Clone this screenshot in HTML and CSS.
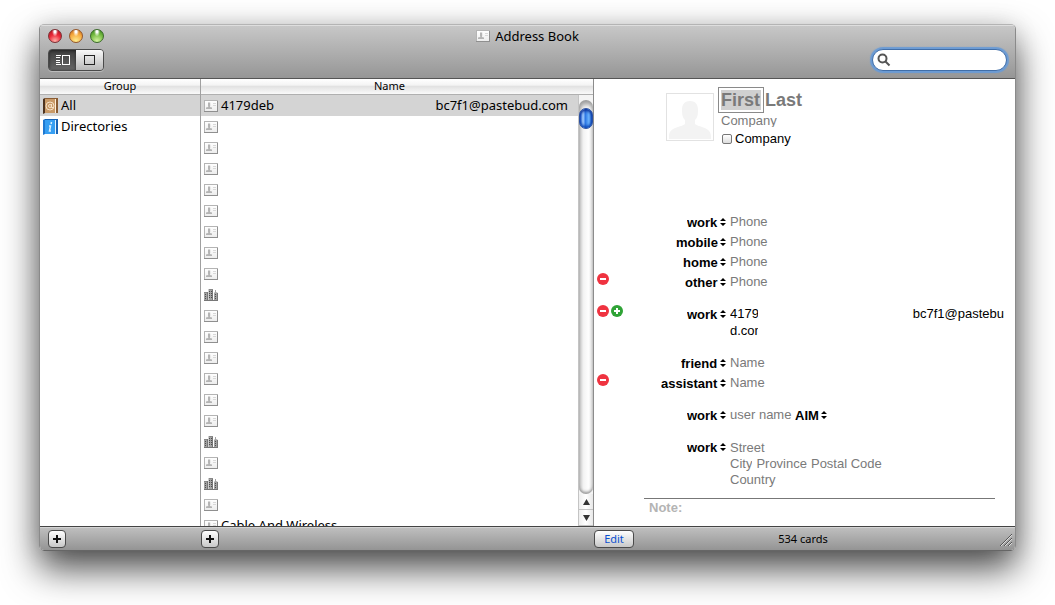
FILE: index.html
```html
<!DOCTYPE html>
<html lang="en">
<head>
    <meta charset="UTF-8">
    <meta name="viewport" content="width=device-width, initial-scale=1.0">
    <title>Address Book</title>
    <link rel="stylesheet" href="styles.css">
</head>
<body>

    <!-- shared icons -->
    <svg class="defs" width="0" height="0" aria-hidden="true">
        <linearGradient id="cardFill" x1="0" y1="0" x2="0" y2="1">
            <stop offset="0" stop-color="#ffffff"/>
            <stop offset="1" stop-color="#ececec"/>
        </linearGradient>
        <symbol id="card" viewBox="0 0 14 12">
            <rect x="0.5" y="0.5" width="13" height="11" fill="url(#cardFill)" stroke="#b4b4b4"/>
            <path d="M0 11.5h14M13.5 1v11" stroke="#8f8f8f"/>
            <path d="M4 2.500h2.200v3.200L5.900 7 8 7.500v1.500H2V7.500l2.300-.5L4 5.700z" fill="#b4b4b4"/>
            <path d="M9 3.500h3M9 5.500h3" stroke="#d8d8d8"/>
        </symbol>
        <symbol id="office" viewBox="0 0 14 12">
            <path d="M0 3h4v9H0zM4.500 0h4v12h-4zM10 4l1-1V1h1v2l2 1v8h-4z" fill="#a2a2a2"/>
            <path d="M0 3.500h3M5 .5h4" stroke="#888"/>
            <path d="M3.500 3v9M8.500 1v11M13.500 4v8M0 11.500h14" stroke="#777"/>
            <path d="M1 5.500h1M1 7.500h1M1 9.500h1M5 2.500h1M7 2.500h1M5 4.500h1M7 4.500h1M5 6.500h1M7 6.500h1M5 8.500h1M7 8.500h1M11 5.500h1M11 7.500h1M11 9.500h1" stroke="#4c4c4c"/>
        </symbol>
        <symbol id="minus" viewBox="0 0 12 12">
            <circle cx="6" cy="6" r="6" fill="#ef3340"/>
            <path d="M3 6h6" stroke="#fff" stroke-width="2"/>
        </symbol>
        <symbol id="plus" viewBox="0 0 12 12">
            <circle cx="6" cy="6" r="6" fill="#2fa336"/>
            <path d="M3 6h6M6 3v6" stroke="#fff" stroke-width="2"/>
        </symbol>
    </svg>

    <main class="window">
        <header class="titlebar">
            <div class="title-row">
                <div class="lights">
                    <button class="light red" aria-label="Close"></button>
                    <button class="light yellow" aria-label="Minimize"></button>
                    <button class="light green" aria-label="Zoom"></button>
                </div>
                <h1><svg class="icon"><use href="#card"/></svg>Address Book</h1>
            </div>
            <div class="tool-row">
                <div class="views">
                    <button class="view active" aria-label="View card and columns">
                        <svg width="14" height="12" viewBox="0 0 14 12" fill="none" stroke="#fff"><path d="M0 1.500h5M0 3.500h4M0 6.500h4M0 8.500h4M0 10.500h5"/><rect x="6.500" y="1.500" width="7" height="9"/></svg>
                    </button>
                    <button class="view" aria-label="View card only">
                        <svg width="12" height="12" viewBox="0 0 12 12" fill="none" stroke="#222"><rect x="0.500" y="1.500" width="10" height="9"/></svg>
                    </button>
                </div>
                <label class="search">
                    <svg width="14" height="14" viewBox="0 0 14 14" fill="none" stroke="#555" stroke-width="2"><circle cx="5.500" cy="5.500" r="4"/><path d="M8.500 8.500l4 4"/></svg>
                    <input type="text" aria-label="Search">
                </label>
            </div>
        </header>

        <div class="panes">
            <section class="groups">
                <h2>Group</h2>
                <ul>
                    <li class="selected">
                        <svg class="book" viewBox="0 0 16 16">
                            <path d="M0 1l2-1v15l-2 1z" fill="#4e3420"/>
                            <path d="M2 0h13v15H2z" fill="#8a5c33"/>
                            <path d="M2 1h10v14H2z" fill="#c99a68"/>
                            <path d="M12.500 1v14" stroke="#fff0dc"/>
                            <circle cx="7" cy="8" r="4" fill="none" stroke="#f6e2c8"/>
                            <circle cx="7" cy="8" r="1.500" fill="none" stroke="#f6e2c8"/>
                            <path d="M8.500 6v3.500H11" fill="none" stroke="#f6e2c8"/>
                        </svg>
                        <span>All</span>
                    </li>
                    <li>
                        <svg class="book" viewBox="0 0 16 16">
                            <path d="M0 1l2-1v15l-2 1z" fill="#1f78d0"/>
                            <path d="M2 0h13v15H2z" fill="#1763b5"/>
                            <path d="M2 1h10v14H2z" fill="#369ff3"/>
                            <path d="M12.500 1v14" stroke="#e2f3ff"/>
                            <path d="M8.500 3l-.4 2M6 7h1.500l-1 5H8" fill="none" stroke="#d9f0ff" stroke-width="1.500"/>
                        </svg>
                        <span>Directories</span>
                    </li>
                </ul>
            </section>

            <section class="names">
                <h2>Name</h2>
                <div class="list">
                    <ul>
                        <li class="selected"><svg class="icon"><use href="#card"/></svg><span>4179deb</span><span class="rest">bc7f1@pastebud.com</span></li>
                        <li><svg class="icon"><use href="#card"/></svg></li>
                        <li><svg class="icon"><use href="#card"/></svg></li>
                        <li><svg class="icon"><use href="#card"/></svg></li>
                        <li><svg class="icon"><use href="#card"/></svg></li>
                        <li><svg class="icon"><use href="#card"/></svg></li>
                        <li><svg class="icon"><use href="#card"/></svg></li>
                        <li><svg class="icon"><use href="#card"/></svg></li>
                        <li><svg class="icon"><use href="#card"/></svg></li>
                        <li><svg class="icon"><use href="#office"/></svg></li>
                        <li><svg class="icon"><use href="#card"/></svg></li>
                        <li><svg class="icon"><use href="#card"/></svg></li>
                        <li><svg class="icon"><use href="#card"/></svg></li>
                        <li><svg class="icon"><use href="#card"/></svg></li>
                        <li><svg class="icon"><use href="#card"/></svg></li>
                        <li><svg class="icon"><use href="#card"/></svg></li>
                        <li><svg class="icon"><use href="#office"/></svg></li>
                        <li><svg class="icon"><use href="#card"/></svg></li>
                        <li><svg class="icon"><use href="#office"/></svg></li>
                        <li><svg class="icon"><use href="#card"/></svg></li>
                        <li><svg class="icon"><use href="#card"/></svg><span>Cable And Wireless</span></li>
                    </ul>
                    <div class="scrollbar">
                        <div class="track"><div class="thumb"></div></div>
                        <button class="arrow" aria-label="Scroll up"><svg width="7" height="6" viewBox="0 0 7 6"><path d="M3.500 0L7 6H0z" fill="#333"/></svg></button>
                        <button class="arrow" aria-label="Scroll down"><svg width="7" height="6" viewBox="0 0 7 6"><path d="M0 0h7L3.500 6z" fill="#333"/></svg></button>
                    </div>
                </div>
            </section>

            <form class="detail">
                <div class="person">
                    <svg class="photo" viewBox="0 0 48 48">
                        <rect x="0.500" y="0.500" width="47" height="47" fill="#fff" stroke="#e2e2e2"/>
                        <path d="M24 8c6 0 8 4 8 9 0 6-1 8-3 10v4c3 3 16 3 16 12v3H3v-3c0-9 13-9 16-12v-4c-2-2-3-4-3-10 0-5 2-9 8-9z" fill="#f3f3f3"/>
                    </svg>
                    <div class="who">
                        <div class="full">
                            <div class="focus"><input class="first" type="text" placeholder="First" aria-label="First"></div>
                            <input class="last" type="text" placeholder="Last" aria-label="Last">
                        </div>
                        <input class="company" type="text" placeholder="Company" aria-label="Company name">
                        <label class="check"><input type="checkbox">Company</label>
                    </div>
                </div>

                <div class="fields">
                    <div class="group">
                        <div class="field">
                            <div class="edit"></div>
                            <select class="kind" aria-label="Phone type"><option>work</option></select>
                            <input type="text" placeholder="Phone" aria-label="Work phone">
                        </div>
                        <div class="field">
                            <div class="edit"></div>
                            <select class="kind" aria-label="Phone type"><option>mobile</option></select>
                            <input type="text" placeholder="Phone" aria-label="Mobile phone">
                        </div>
                        <div class="field">
                            <div class="edit"></div>
                            <select class="kind" aria-label="Phone type"><option>home</option></select>
                            <input type="text" placeholder="Phone" aria-label="Home phone">
                        </div>
                        <div class="field">
                            <div class="edit"><button type="button" aria-label="Remove phone"><svg><use href="#minus"/></svg></button></div>
                            <select class="kind" aria-label="Phone type"><option>other</option></select>
                            <input type="text" placeholder="Phone" aria-label="Other phone">
                        </div>
                    </div>

                    <div class="group">
                        <div class="field">
                            <div class="edit">
                                <button type="button" aria-label="Remove email"><svg><use href="#minus"/></svg></button>
                                <button type="button" aria-label="Add email"><svg><use href="#plus"/></svg></button>
                            </div>
                            <select class="kind" aria-label="Email type"><option>work</option></select>
                            <div class="email">
                                <div class="email-line"><span class="clip">4179</span><span>bc7f1@pastebu</span></div>
                                <div class="email-line"><span class="clip">d.com</span></div>
                            </div>
                        </div>
                    </div>

                    <div class="group">
                        <div class="field">
                            <div class="edit"></div>
                            <select class="kind" aria-label="Relation"><option>friend</option></select>
                            <input type="text" placeholder="Name" aria-label="Friend name">
                        </div>
                        <div class="field">
                            <div class="edit"><button type="button" aria-label="Remove relation"><svg><use href="#minus"/></svg></button></div>
                            <select class="kind" aria-label="Relation"><option>assistant</option></select>
                            <input type="text" placeholder="Name" aria-label="Assistant name">
                        </div>
                    </div>

                    <div class="group">
                        <div class="field">
                            <div class="edit"></div>
                            <select class="kind" aria-label="Chat type"><option>work</option></select>
                            <div class="chat">
                                <input type="text" placeholder="user name" aria-label="User name">
                                <select class="kind" aria-label="Service"><option>AIM</option></select>
                            </div>
                        </div>
                    </div>

                    <div class="group">
                        <div class="field">
                            <div class="edit"></div>
                            <select class="kind" aria-label="Address type"><option>work</option></select>
                            <div class="address">
                                <input type="text" placeholder="Street" aria-label="Street">
                                <div class="city">
                                    <input type="text" placeholder="City" aria-label="City">
                                    <input type="text" placeholder="Province" aria-label="Province">
                                    <input type="text" placeholder="Postal Code" aria-label="Postal Code">
                                </div>
                                <input type="text" placeholder="Country" aria-label="Country">
                            </div>
                        </div>
                    </div>
                </div>

                <div class="note"><label for="note">Note:</label><input id="note" type="text"></div>
            </form>
        </div>

        <footer class="bottombar">
            <div class="foot-groups"><button class="add" aria-label="Add group"><svg width="8" height="8" viewBox="0 0 8 8"><path d="M0 4h8M4 0v8" stroke="#111" stroke-width="2"/></svg></button></div>
            <div class="foot-names"><button class="add" aria-label="Add person"><svg width="8" height="8" viewBox="0 0 8 8"><path d="M0 4h8M4 0v8" stroke="#111" stroke-width="2"/></svg></button></div>
            <div class="foot-detail">
                <button class="edit-btn">Edit</button>
                <span class="count">534 cards</span>
                <svg class="grip" width="12" height="12" viewBox="0 0 12 12"><path d="M1 12L12 1M5 12l7-7M9 12l3-3" stroke="#ddd"/><path d="M0 12L12 0M4 12l8-8M8 12l4-4" stroke="#555"/></svg>
            </div>
        </footer>
    </main>

</body>
</html>
```
FILE: styles.css
```css
* {
    margin: 0;
    padding: 0;
    box-sizing: border-box;
}

body {
    display: flex;
    height: 100vh;
    padding: 24px 39px 54px;
    background: #fff;
    color: #000;
    font-family: "Noto Sans", "Lucida Grande", sans-serif;
    font-size: 13px;
    overflow: hidden;
}

.defs {
    position: absolute;
}

button,
input,
select {
    font: inherit;
    color: inherit;
    background: none;
    border: none;
    border-radius: 0;
    outline: none;
    appearance: none;
}

svg {
    display: block;
    flex: none;
}

ul {
    list-style: none;
}

.window {
    flex: 1;
    min-width: 0;
    display: flex;
    flex-direction: column;
    border: 1px solid #8a8a8a;
    border-top-color: #b4b4b4;
    border-bottom-color: #666;
    border-radius: 5px;
    box-shadow: 0 18px 36px rgba(0, 0, 0, 0.7), 0 0 24px rgba(0, 0, 0, 0.1);
    overflow: hidden;
}

/* Title bar */
.titlebar {
    height: 54px;
    border-bottom: 1px solid #555;
    background: linear-gradient(#c8c8c8, #969696);
    box-shadow: inset 0 1px #dedede;
}

.title-row {
    display: grid;
    grid-template-columns: 1fr auto 1fr;
    align-items: center;
    height: 22px;
    padding: 0 8px;
}

.lights {
    display: flex;
    gap: 7px;
}

.light {
    width: 14px;
    height: 14px;
    border: 1px solid #555;
    border-radius: 50%;
}

.red {
    border-color: #7c3034;
    background: radial-gradient(ellipse at 50% 10%, #fff 0 10%, transparent 35%), radial-gradient(circle at 50% 90%, #ffb0a8, #ec2b3a 50%, #a50d1c);
}

.yellow {
    border-color: #94572a;
    background: radial-gradient(ellipse at 50% 10%, #fff 0 10%, transparent 35%), radial-gradient(circle at 50% 90%, #ffee90, #f5a53a 60%, #b55d18);
}

.green {
    border-color: #3b6a2a;
    background: radial-gradient(ellipse at 50% 10%, #fff 0 10%, transparent 35%), radial-gradient(circle at 50% 90%, #d4f5a0, #6fb63c 60%, #2f7a1c);
}

h1 {
    display: flex;
    align-items: center;
    gap: 5px;
    font-size: 13px;
    font-weight: normal;
}

.icon {
    width: 14px;
    height: 12px;
}

.tool-row {
    display: flex;
    justify-content: space-between;
    align-items: center;
    height: 26px;
    padding: 0 8px;
}

.views {
    display: flex;
    border: 1px solid #4a4a4a;
    border-radius: 4px;
    box-shadow: 0 1px #bbb;
    overflow: hidden;
}

.view {
    display: flex;
    align-items: center;
    justify-content: center;
    width: 27px;
    height: 20px;
    background: linear-gradient(#fafafa, #b8b8b8);
}

.view.active {
    background: linear-gradient(#3e3e3e, #666);
    box-shadow: inset 0 1px 3px #222;
}

.search {
    display: flex;
    align-items: center;
    gap: 4px;
    width: 135px;
    height: 22px;
    padding: 0 4px;
    border: 1px solid #416ea8;
    border-radius: 11px;
    background: #fff;
    box-shadow: 0 0 1px 2px #6b9bd4;
}

.search input {
    flex: 1;
    min-width: 0;
}

/* Panes */
.panes {
    flex: 1;
    min-height: 0;
    display: flex;
    background: #fff;
}

.groups,
.foot-groups {
    width: 161px;
}

.groups {
    border-right: 1px solid #a0a0a0;
}

.names,
.foot-names {
    width: 393px;
}

.names {
    display: flex;
    flex-direction: column;
    border-right: 1px solid #8c8c8c;
}

h2 {
    flex: none;
    height: 16px;
    border-bottom: 1px solid #b0b0b0;
    background: linear-gradient(#fff 0, #f4f4f4 40%, #e2e2e2 50%, #fafafa 100%);
    font-size: 11px;
    line-height: 14px;
    font-weight: normal;
    text-align: center;
}

.names h2 {
    padding-right: 15px;
}

li {
    display: flex;
    align-items: center;
    gap: 3px;
    height: 21px;
    padding: 0 10px 0 3px;
    line-height: 21px;
    white-space: nowrap;
}

li.selected {
    background: #d4d4d4;
}

.book {
    width: 16px;
    height: 16px;
}

.groups li {
    gap: 2px;
}

.rest {
    margin-left: auto;
}

.list {
    flex: 1;
    min-height: 0;
    display: flex;
    overflow: hidden;
}

.list ul {
    flex: 1;
    min-width: 0;
}

.scrollbar {
    display: flex;
    flex-direction: column;
    width: 15px;
    border-left: 1px solid #c4c4c4;
    background: #f4f4f4;
}

.track {
    flex: 1;
    margin-top: 5px;
    padding-top: 8px;
    border-radius: 8px;
    background: linear-gradient(90deg, #c8c8c8, #f2f2f2 30%, #fff 70%, #e4e4e4);
    box-shadow: inset 0 5px 5px -1px #999, inset 0 -3px 3px -1px #999;
}

.thumb {
    height: 21px;
    border: 1px solid #2a50a0;
    border-radius: 7px;
    background: linear-gradient(90deg, #1c55c8, #a8d0ff 25%, #2e78e4 45%, #6db6ff 75%, #1a4fb8);
    box-shadow: inset 0 3px 3px -1px #0c2f96, inset 0 -2px 3px #0c48b8;
}

.arrow {
    display: flex;
    align-items: center;
    justify-content: center;
    height: 16px;
    border-bottom: 1px solid #c4c4c4;
    background: linear-gradient(90deg, #eee, #fff 50%, #e8e8e8);
}

/* Card detail */
.detail {
    flex: 1;
    min-width: 0;
    font-family: "Liberation Sans", Arial, sans-serif;
}

::placeholder {
    color: #7a7a7a;
    opacity: 1;
}

.person {
    display: flex;
    gap: 4px;
    height: 133px;
    padding: 8px 0 0 72px;
}

.photo {
    width: 48px;
    height: 48px;
    margin-top: 6px;
}

.who {
    display: flex;
    flex-direction: column;
    flex: 1;
    min-width: 0;
}

.full {
    display: flex;
    align-items: center;
    font-size: 18px;
    font-weight: bold;
}

.focus {
    padding: 2px;
    border: 1px solid #8a8a8a;
}

.first {
    display: block;
    width: 40px;
    height: 20px;
    background: #d0d0d0;
}

.last {
    width: 80px;
    margin-left: 1px;
}

.company {
    height: 14px;
    margin-left: 3px;
}

.check {
    display: flex;
    align-items: center;
    gap: 3px;
    margin: 4px 0 0 4px;
    line-height: 16px;
}

.check input {
    width: 10px;
    height: 10px;
    border: 1px solid #777;
    border-radius: 2px;
    background: linear-gradient(#fff, #ddd);
}

.fields {
    display: flex;
    flex-direction: column;
    gap: 12px;
    padding: 0 11px 0 3px;
}

.field {
    display: grid;
    grid-template-columns: 30px 99px 1fr;
    align-items: start;
    min-height: 20px;
}

.field input {
    height: 19px;
    min-width: 0;
}

.field > :last-child {
    margin-left: 4px;
}

.edit {
    display: flex;
    gap: 2px;
    padding-top: 1px;
}

.edit svg {
    width: 12px;
    height: 12px;
}

.kind {
    justify-self: end;
    height: 20px;
    padding-right: 8px;
    font-weight: bold;
    background: url("data:image/svg+xml,%3Csvg xmlns='http://www.w3.org/2000/svg' width='6' height='8'%3E%3Cpath d='M3 0l3 3H0zM3 8L0 5h6z'/%3E%3C/svg%3E") no-repeat right center;
}

.email {
    padding: 1px 0 2px;
    line-height: 17px;
}

.email-line {
    display: flex;
    justify-content: space-between;
}

.clip {
    width: 28px;
    overflow: hidden;
}

.chat {
    display: flex;
}

.chat input {
    width: 65px;
}

.address {
    padding-top: 2px;
}

.address input {
    display: block;
    height: 16px;
}

.city {
    display: flex;
}

.city input {
    field-sizing: content;
    margin-right: 4px;
}

.note {
    display: flex;
    margin: 11px 20px 0 50px;
    padding: 1px 5px;
    border-top: 1px solid #777;
    color: #b4b4b4;
    font-weight: bold;
}

.note input {
    flex: 1;
    min-width: 0;
}

/* Bottom bar */
.bottombar {
    display: flex;
    height: 24px;
    border-top: 1px solid #444;
    background: linear-gradient(#c0c0c0, #949494);
    box-shadow: inset 0 1px #d4d4d4;
}

.bottombar > div {
    display: flex;
    align-items: center;
}

.foot-groups {
    padding-left: 8px;
}

.bottombar .foot-detail {
    flex: 1;
    display: grid;
    grid-template-columns: 1fr auto 1fr;
    padding-right: 3px;
}

.add,
.edit-btn {
    display: flex;
    align-items: center;
    justify-content: center;
    width: 18px;
    height: 18px;
    border: 1px solid #4a4a4a;
    border-radius: 4px;
    background: linear-gradient(#fff, #c8c8c8);
}

.edit-btn {
    width: 40px;
    color: #0a50d0;
    font-size: 11px;
}

.count {
    font-size: 11px;
}

.grip {
    align-self: end;
    justify-self: end;
    margin-bottom: 4px;
}
```
